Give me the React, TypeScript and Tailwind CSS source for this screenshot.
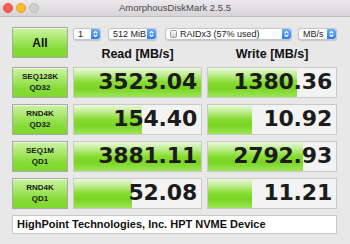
import React from "react";

const rows = [
  { l1: "SEQ128K", l2: "QD32", read: "3523.04", rw: 127, write: "1380.36", ww: 89 },
  { l1: "RND4K", l2: "QD32", read: "154.40", rw: 68, write: "10.92", ww: 44 },
  { l1: "SEQ1M", l2: "QD1", read: "3881.11", rw: 127, write: "2792.93", ww: 95 },
  { l1: "RND4K", l2: "QD1", read: "52.08", rw: 58, write: "11.21", ww: 44 },
];

const greenBtn =
  "border border-[#a9a9a9] bg-[linear-gradient(to_bottom,#cdf2a6_0%,#a6e667_40%,#86dc38_70%,#7ed82c_100%)] shadow-[inset_0_1px_0_rgba(255,255,255,0.6)]";

function Arrows() {
  return (
    <div className="w-[9px] h-full rounded-r-[3px] bg-[linear-gradient(to_bottom,#6aaefc,#2f7cf2)] flex items-center justify-center">
      <svg width="5" height="8" viewBox="0 0 5 8" fill="none" stroke="white" strokeWidth="1.1" strokeLinecap="round" strokeLinejoin="round">
        <path d="M1 3 L2.5 1.5 L4 3" />
        <path d="M1 5 L2.5 6.5 L4 5" />
      </svg>
    </div>
  );
}

function Select({ w, children }: { w: string; children: React.ReactNode }) {
  return (
    <div className={`${w} h-[12px] flex items-center bg-white border border-[#c6c6c6] rounded-[3px] shadow-[0_0.5px_1px_rgba(0,0,0,0.15)]`}>
      <div className="flex-1 flex items-center pl-[4px] text-[9px] leading-none text-[#222] overflow-hidden whitespace-nowrap">{children}</div>
      <Arrows />
    </div>
  );
}

function Cell({ value, bar }: { value: string; bar: number }) {
  return (
    <div className="relative h-[31px] bg-[#f3f3f3] border border-[#c9c9c9] flex items-center justify-end pr-[4px] overflow-hidden">
      <div
        className="absolute left-0 top-0 bottom-0 bg-[linear-gradient(to_bottom,#eaf8dc_0%,#c2ee96_22%,#86dc30_50%,#7ad424_70%,#9be655_100%)]"
        style={{ width: bar }}
      />
      <span className="relative text-[22px] font-bold leading-none text-[#1c1c1c] tracking-[-0.2px]" style={{ fontFamily: '"DejaVu Sans", Verdana, sans-serif' }}>
        {value}
      </span>
    </div>
  );
}

export default function App() {
  return (
    <div className="w-[350px] h-[244px] bg-[#e8e8e8] overflow-hidden" style={{ fontFamily: '"Liberation Sans", Arial, sans-serif' }}>
      <div className="h-[17px] relative flex items-center justify-center bg-[linear-gradient(to_bottom,#ebe9eb,#d6d4d6)] border-b border-[#bdbdbd]">
        <div className="absolute left-[3px] top-[3px] flex gap-[3px]">
          <div className="w-[10px] h-[10px] rounded-full bg-[#fc5d57] border border-[#e0443e]" />
          <div className="w-[10px] h-[10px] rounded-full bg-[#fdbb2e] border border-[#dea123]" />
          <div className="w-[10px] h-[10px] rounded-full bg-[#d0d0d0] border border-[#bcbcbc]" />
        </div>
        <span className="text-[9.5px] text-[#4a4a4a]">AmorphousDiskMark 2.5.5</span>
      </div>

      <div className="pl-[12px] pt-[10px]">
        <div className="grid grid-cols-[56px_129px_130px] gap-x-[5px] gap-y-[6px]">
          <div className={`h-[31px] flex items-center justify-center text-[12px] font-bold text-[#111] ${greenBtn}`}>All</div>
          <div className="col-span-2 flex flex-col">
            <div className="flex items-center mt-[1px]">
              <Select w="w-[28px]">1</Select>
              <div className="w-[7px]" />
              <Select w="w-[49px]">512 MiB</Select>
              <div className="w-[8px]" />
              <Select w="w-[127px]">
                <span className="w-[7px] h-[8px] mr-[3px] rounded-[1.5px] border border-[#9a9a9a] bg-[linear-gradient(to_bottom,#fafafa,#cfcfcf)]" />
                RAIDx3 (57% used)
              </Select>
              <div className="w-[6px]" />
              <Select w="w-[39px]">MB/s</Select>
            </div>
            <div className="grid grid-cols-[129px_130px] gap-x-[5px] mt-[8px]">
              <div className="text-center text-[12.5px] font-bold text-[#111] leading-none">Read [MB/s]</div>
              <div className="text-center text-[12.5px] font-bold text-[#111] leading-none">Write [MB/s]</div>
            </div>
          </div>

          {rows.map((r, i) => (
            <React.Fragment key={i}>
              <div className={`h-[31px] flex flex-col items-center justify-center text-[8px] font-bold leading-[11px] text-[#1a1a1a] ${greenBtn}`}>
                <span>{r.l1}</span>
                <span>{r.l2}</span>
              </div>
              <Cell value={r.read} bar={r.rw} />
              <Cell value={r.write} bar={r.ww} />
            </React.Fragment>
          ))}

          <div className="col-span-3 h-[19px] bg-white border border-[#c6c6c6] flex items-center pl-[4px] text-[11px] font-bold text-[#111]">
            HighPoint Technologies, Inc. HPT NVME Device
          </div>
        </div>
      </div>
    </div>
  );
}
